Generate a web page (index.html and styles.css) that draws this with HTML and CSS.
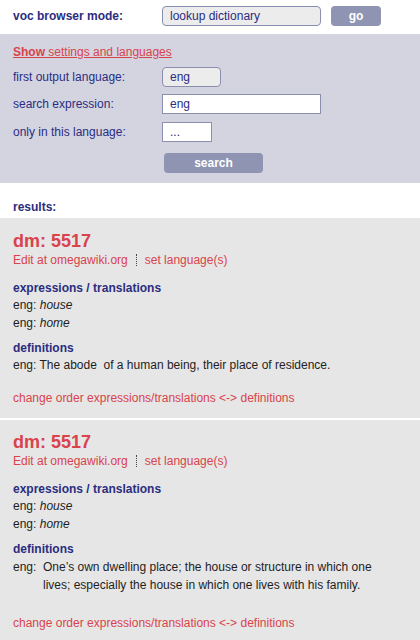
FILE: index.html
```html
<!DOCTYPE html>
<html>
<head>
<meta charset="utf-8">
<link rel="stylesheet" href="styles.css">
</head>
<body>
<div class="topbar">
  <span class="mode-label">voc browser mode:</span>
  <div class="select select-wide">lookup dictionary</div>
  <div class="btn btn-go">go</div>
</div>
<div class="panel">
  <a class="show-link"><b>Show</b> settings and languages</a>
  <div class="form">
    <span class="flabel">first output language:</span>
    <div class="select select-small">eng</div>
    <span class="flabel">search expression:</span>
    <div class="input input-wide">eng</div>
    <span class="flabel">only in this language:</span>
    <div class="input input-small">...</div>
    <span></span>
    <div class="btn btn-search">search</div>
  </div>
</div>
<div class="results-head">results:</div>
<div class="card">
  <div class="dm">dm: 5517</div>
  <div class="links"><span>Edit at omegawiki.org</span><span class="sep">set language(s)</span></div>
  <div class="heading">expressions / translations</div>
  <div class="line">eng: <i>house</i></div>
  <div class="line">eng: <i>home</i></div>
  <div class="heading heading-def">definitions</div>
  <div class="line">eng: The abode&nbsp; of a human being, their place of residence.</div>
  <div class="change">change order expressions/translations &lt;-&gt; definitions</div>
</div>
<div class="card card-second">
  <div class="dm">dm: 5517</div>
  <div class="links"><span>Edit at omegawiki.org</span><span class="sep">set language(s)</span></div>
  <div class="heading">expressions / translations</div>
  <div class="line">eng: <i>house</i></div>
  <div class="line">eng: <i>home</i></div>
  <div class="heading heading-def">definitions</div>
  <div class="def-row"><span class="def-lang">eng:</span><span class="def-text">One’s own dwelling place; the house or structure in which one lives; especially the house in which one lives with his family.</span></div>
  <div class="change change-far">change order expressions/translations &lt;-&gt; definitions</div>
</div>
</body>
</html>
```
FILE: styles.css
```css
html, body {
  margin: 0;
  padding: 0;
  background: #ffffff;
  font-family: "Liberation Sans", Arial, sans-serif;
  font-size: 12px;
  color: #1e1e1e;
}
.topbar {
  height: 34px;
  display: flex;
  align-items: flex-start;
  padding: 6px 0 0 13px;
  box-sizing: border-box;
}
.mode-label {
  width: 149px;
  font-weight: bold;
  color: #2b2d80;
  line-height: 20px;
}
.select {
  height: 20px;
  box-sizing: border-box;
  border: 1px solid #8a8fb0;
  border-radius: 4px;
  background: #ececec;
  color: #2b2d80;
  padding-left: 7px;
  line-height: 18px;
}
.select-wide { width: 159px; }
.select-small { width: 59px; }
.btn {
  height: 20px;
  background: #8e94b1;
  border-radius: 4px;
  color: #ffffff;
  font-weight: bold;
  text-align: center;
  line-height: 20px;
}
.btn-go {
  width: 50px;
  margin-left: 10px;
}
.panel {
  background: #d3d4e0;
  padding: 10px 0 10px 13px;
}
.show-link {
  display: block;
  color: #d9434b;
  text-decoration: underline;
  line-height: 17px;
}
.form {
  display: grid;
  grid-template-columns: 149px auto;
  align-items: center;
  justify-items: start;
  row-gap: 7px;
  margin-top: 6px;
}
.flabel {
  color: #2b2d80;
}
.input {
  height: 20px;
  box-sizing: border-box;
  border: 1px solid #8a8fb0;
  background: #ffffff;
  color: #2b2d80;
  padding-left: 7px;
  line-height: 18px;
}
.input-wide { width: 159px; }
.input-small { width: 50px; margin-top: 1px; }
.btn-search {
  width: 99px;
  margin-left: 2px;
  margin-top: 4px;
}
.results-head {
  height: 35px;
  box-sizing: border-box;
  padding: 16px 0 0 13px;
  font-weight: bold;
  color: #2b2d80;
  line-height: 16px;
}
.card {
  background: #e6e6e6;
  padding: 12px 13px 12px 13px;
}
.card-second {
  margin-top: 2px;
  padding-top: 11px;
}
.dm {
  font-size: 18px;
  font-weight: bold;
  color: #d9434b;
  line-height: 22px;
}
.links {
  color: #d9434b;
  line-height: 16px;
  display: flex;
  align-items: center;
}
.sep {
  border-left: 1px dotted #444;
  margin-left: 8px;
  padding-left: 8px;
  line-height: 12px;
}
.heading {
  font-weight: bold;
  color: #2b2d80;
  line-height: 16px;
  margin-top: 12px;
}
.heading-def {
  margin-top: 8px;
}
.line {
  line-height: 18px;
}
.def-row {
  display: flex;
  line-height: 17.5px;
  margin-top: 2px;
}
.def-lang {
  width: 30px;
  flex: none;
}
.def-text {
  width: 350px;
}
.change {
  color: #d9434b;
  line-height: 16px;
  margin-top: 16px;
}
.change-far {
  margin-top: 21px;
}
```
